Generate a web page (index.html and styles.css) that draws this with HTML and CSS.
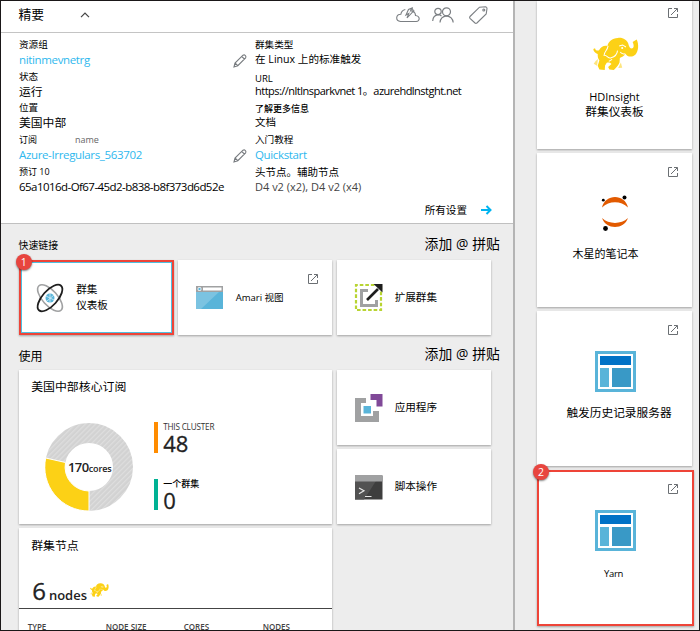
FILE: index.html
```html
<!DOCTYPE html>
<html lang="zh-CN">
<head>
<meta charset="utf-8">
<title>HDInsight</title>
<link rel="stylesheet" href="styles.css">
</head>
<body>
<svg class="defs" aria-hidden="true">
  <symbol id="open" viewBox="0 0 10 10"><path d="M4 .5H.5v9h9V6M6 .5h3.5V4M3 7l6.3-6.3" fill="none" stroke="#6b6f73" stroke-width="1"/></symbol>
  <symbol id="pencil" viewBox="0 0 14 14"><path d="M1 13l1-4L10 1.2q1.300-.8 2.300.3t.3 2.300L4.800 11.700zM2 9l2.800 2.700M8.800 2.500l2.700 2.700" fill="none" stroke="#777b7f" stroke-width="1.100"/></symbol>
  <symbol id="elephant" viewBox="248 111 137 100">
    <path fill="#fcd116" d="M262 161C255 158 249 153 249 146L254 144C255 151 261 152 266 150C270 141 281 134 291 137C293 124 305 114 322 113C337 111 349 119 353 130C355 143 363 149 368 142C371 136 368 130 366 125L378 118C385 131 384 153 374 163C364 172 350 170 345 160C341 167 333 170 328 173L327 186C323 197 314 203 310 209L297 207L293 200L303 191C298 185 292 187 289 187L284 195L283 209L267 207L262 196L267 180C262 174 262 167 262 161Z"/>
    <path fill="#fde57e" d="M256 182l7-6-3 20-10-6zM331 186l4 16-12 1z"/>
    <path fill="none" stroke="#fff" stroke-width="3" d="M293 137C291 151 281 154 281 165C291 164 293 176 302 172C315 169 320 161 321 151M326 137l10-3 10 6M329 155q6 8 15 5M295 183l10-6"/>
    <circle cx="335" cy="143" r="3" fill="#fff"/>
  </symbol>
  <symbol id="board" viewBox="0 0 41 41"><path fill="#59b4d9" d="M0 0h41v41H0z"/><path fill="#fff" d="M3 3h35v35H3z"/><path fill="#0072c6" d="M5 5h31v9H5z"/><path fill="#59b4d9" d="M5 17h9v19H5z"/><path fill="#3999c6" d="M17 17h19v19H17z"/></symbol>
</svg>
<div class="screen">
  <main class="blade">
    <header class="bar">
      <h1>精要</h1>
      <svg class="caret" viewBox="0 0 10 6"><path d="M1 5.200L5 1l4 4.200" fill="none" stroke="#444" stroke-width="1.200"/></svg>
      <div class="tools">
        <svg class="cloud" viewBox="0 0 24 16" fill="none" stroke="#7b7f83" stroke-width="1.100"><path d="M12 14.500H4.500Q.6 14 .7 10.800 1 7.500 4.800 7.300 5.500 3.500 9.300 2.500M17 4.500q2.500 1 2.500 4 3.500.4 3.700 3.200-.2 2.600-3 2.800H10"/><path d="M10 8l2.500-5.500L16 1l-1.500 3h3L11 11l1.800-4.500zM16 1l2 4"/></svg>
        <svg class="people" viewBox="0 0 22 16" fill="none" stroke="#7b7f83" stroke-width="1.200"><circle cx="6" cy="4.500" r="3.200"/><circle cx="14.500" cy="4.800" r="4"/><path d="M.7 14q.3-5.500 5.300-6.300 2.300.1 3.500 1.500M8 15.500q.5-6 6.500-6.700 6 .7 6.700 6.700"/></svg>
        <svg class="tag" viewBox="0 0 19 18" fill="none" stroke="#7b7f83" stroke-width="1.100"><path d="M1 10.500L10.500 1.200 16.500.8q1.500.2 1.500 1.700l-.8 5.500-9.300 9q-1 .7-1.900 0L1 12.300q-.7-.9 0-1.800z"/><circle cx="14.800" cy="4" r="1"/></svg>
      </div>
    </header>

    <section class="essentials">
      <dl class="facts">
        <div><dt>资源组</dt><dd class="link">nitinmevnetrg</dd></div>
        <div><dt>状态</dt><dd class="raised">运行</dd></div>
        <div><dt>位置</dt><dd class="raised">美国中部</dd></div>
        <div><dt class="small split"><span>订阅</span><span class="dim">name</span></dt><dd class="link">Azure-Irregulars_563702</dd></div>
        <div><dt class="small">预订 10</dt><dd class="guid">65a1016d-Of67-45d2-b838-b8f373d6d52e</dd></div>
      </dl>
      <div class="pens">
        <svg><use href="#pencil"/></svg>
        <svg><use href="#pencil"/></svg>
      </div>
      <dl class="facts">
        <div><dt>群集类型</dt><dd class="spark">在 Linux 上的标准触发</dd></div>
        <div><dt class="url">URL</dt><dd class="host">https://nltlnsparkvnet 1。azurehdlnstght.net</dd></div>
        <div><dt class="more">了解更多信息</dt><dd class="doc">文档</dd></div>
        <div><dt>入门教程</dt><dd class="link">Quickstart</dd></div>
        <div><dt class="nodes">头节点。辅助节点</dt><dd class="size">D4 v2 (x2), D4 v2 (x4)</dd></div>
      </dl>
      <a class="all"><span>所有设置</span><svg viewBox="0 0 11 10"><path d="M0 5h9.500M5.500 1l4 4-4 4" fill="none" stroke="#00b4f0" stroke-width="2"/></svg></a>
    </section>

    <div class="heading quick"><h2>快速链接</h2><a>添加 @ 拼贴</a></div>
    <div class="tiles">
      <article class="tile picked"><i class="badge">1</i>
        <svg class="ic" viewBox="0 0 28 28" fill="none"><ellipse cx="14" cy="14" rx="16.500" ry="7.500" transform="rotate(48 14 14)" stroke="#a0a1a2" stroke-width="1.600"/><ellipse cx="14" cy="14" rx="16.500" ry="7.500" transform="rotate(-48 14 14)" stroke="#1e1e1e" stroke-width="1.800"/><circle cx="14" cy="14" r="4.500" fill="#59b4d9"/><path d="M10 12l8 4M14 9.500v9M18 11l-7 6" stroke="#d5edf7" stroke-width=".8"/></svg>
        <p class="two">群集<br>仪表板</p></article>
      <article class="tile"><svg class="open"><use href="#open"/></svg>
        <svg class="ic" viewBox="0 0 28 28"><path fill="#59b4d9" d="M0 2h27v23H0z"/><path fill="#7bc3e1" d="M0 8h23L5 25H0z"/><path fill="#a0a1a2" d="M0 2h27v6H0z"/><path fill="#fff" d="M7 3.500h18.500v3H7z"/><circle cx="3.500" cy="5" r="2" fill="#fff"/><circle cx="3.500" cy="5" r="1.200" fill="#59b4d9"/></svg>
        <p class="ambari">Amari 视图</p></article>
      <article class="tile">
        <svg class="ic" viewBox="0 0 28 28" fill="none"><path d="M1 1h25v25H1z" stroke="#b8d432" stroke-width="2.200" stroke-dasharray="3.600 1.955" stroke-dashoffset="1.800"/><path d="M13 6.500H6.500v15h15V16" stroke="#a0a1a2" stroke-width="3"/><path d="M12 16L23 5" stroke="#1e1e1e" stroke-width="2.600"/><path d="M18.500 0H27.500v8.500z" fill="#1e1e1e"/></svg>
        <p>扩展群集</p></article>
    </div>

    <div class="heading usage"><h2>使用</h2><a>添加 @ 拼贴</a></div>
    <div class="tiles">
      <article class="card cores">
        <h3>美国中部核心订阅</h3>
        <div class="chart">
          <div class="donut"><svg viewBox="0 0 88 88">
            <defs><pattern id="hatch" width="3.600" height="3.600" patternUnits="userSpaceOnUse" patternTransform="rotate(45)"><path fill="#d2d2d2" d="M0 0h4v4H0z"/><path fill="#dedede" d="M0 0h1.200v4H0z"/></pattern></defs>
            <circle cx="44" cy="44" r="34" fill="none" stroke="url(#hatch)" stroke-width="20"/>
            <path d="M44 88A44 44 0 0 1 .7 35L20.500 39.500A24 24 0 0 0 44 68z" fill="#fcd116" stroke="#fff" stroke-width="1"/></svg>
            <span><b>170</b>cores</span></div>
          <div class="legend">
            <div class="key orange"><small>THIS CLUSTER</small><strong>48</strong></div>
            <div class="key teal"><small class="zh">一个群集</small><strong>0</strong></div>
          </div>
        </div>
      </article>
      <div class="stack">
        <article class="tile"><svg class="ic" viewBox="0 0 28 28"><path fill="#a0a1a2" d="M0 4h11v5H6v13h12v-5h6v11H0z"/><path fill="#804998" d="M15.500 0H27.500v12.500H21.500V6H15.500z"/><path fill="#59b4d9" d="M8.500 12h7.500v7.500H8.500z"/></svg><p>应用程序</p></article>
        <article class="tile"><svg class="ic" viewBox="0 0 28 28"><path fill="#3e3e3e" d="M0 2.500h27.500v24H0z"/><path fill="#525252" d="M0 8h21L9 26.500H0z"/><path fill="#a0a1a2" d="M0 2.500h27.500V8.500H0z"/><path d="M4 15l5 2.800-5 3M10 23.500h6.500" fill="none" stroke="#e6e6e6" stroke-width="1.200"/></svg><p>脚本操作</p></article>
      </div>
    </div>

    <article class="card hosts">
      <h3>群集节点</h3>
      <div class="count"><b>6</b><span>nodes</span><svg><use href="#elephant"/></svg></div>
      <div class="cols"><span>TYPE</span><span>NODE SIZE</span><span>CORES</span><span>NODES</span></div>
    </article>
  </main>

  <aside class="dash">
    <article class="big first"><svg class="open"><use href="#open"/></svg><svg class="pic eleph"><use href="#elephant"/></svg><p class="hd">HDInsight<br><span>群集仪表板</span></p></article>
    <article class="big"><svg class="open"><use href="#open"/></svg>
      <svg class="pic jup" viewBox="0 0 28 38"><path fill="#e25a00" d="M1 12.500C4 -1.500 24 -1.500 27 12.500C20 5.500 8 5.500 1 12.500ZM1 23C8 29.500 20 29.500 27 23C23 35 5 35 1 23Z"/><circle cx="2.300" cy="5.200" r="1.400"/><circle cx="23.500" cy="2.400" r="2"/><circle cx="4.500" cy="33.500" r="2.400"/></svg>
      <p class="nb">木星的笔记本</p></article>
    <article class="big"><svg class="open"><use href="#open"/></svg><svg class="pic"><use href="#board"/></svg><p class="hist">触发历史记录服务器</p></article>
    <article class="big ring"><i class="badge">2</i><svg class="open"><use href="#open"/></svg><svg class="pic"><use href="#board"/></svg><p class="yarn">Yarn</p></article>
  </aside>
</div>
</body>
</html>
```

FILE: styles.css
```css
* { box-sizing: border-box; margin: 0; padding: 0; }
body { width: 700px; height: 631px; overflow: hidden; font-family: "Open Sans", "Noto Sans CJK SC", sans-serif; color: #000; }
svg { display: block; }
.defs { display: none; }
h1, h2, h3 { font-weight: 400; }
.screen { display: flex; width: 700px; height: 631px; border: 1px solid #1a1718; background: #ededed; overflow: hidden; }

.blade { width: 514px; flex: none; border-right: 2px solid #b4b4b4; }
.bar { height: 32px; display: flex; align-items: center; padding: 0 25px 3px 17.500px; background: #fff; border-bottom: 1px solid #c4c4c4; }
.bar h1 { font-size: 12.800px; line-height: 20px; margin-top: -2px; }
.caret { width: 10px; height: 6px; margin-left: 35.500px; }
.tools { display: flex; align-items: center; margin-left: auto; gap: 12px; }
.cloud { width: 24px; height: 16px; }
.people { width: 22px; height: 16px; }
.tag { width: 19px; height: 18px; margin-left: 3px; }

.essentials { display: grid; grid-template-columns: 214px 22px 1fr; grid-template-rows: 163px 16px; height: 191px; padding: 5px 0 0 18px; background: #fff; border-bottom: 1px solid #c0c0c0; align-content: start; }
.facts > div { height: 31.700px; white-space: nowrap; }
dt { height: 14px; line-height: 13.500px; font-size: 9.600px; }
dd { height: 16px; line-height: 16px; font-size: 11.800px; }
.raised { line-height: 14px; }
.small { font-size: 9px; }
.split { display: flex; gap: 38px; }
.dim { color: #666; font-size: 9px; }
.link { color: #2eb8ee; font-size: 11.500px; letter-spacing: -.35px; }
.guid { font-size: 11.500px; letter-spacing: -.55px; }
.spark { font-size: 10.600px; line-height: 14px; }
.url { font-size: 9.500px; line-height: 17px; }
.host { font-size: 11px; letter-spacing: -.52px; line-height: 14.500px; }
.more { font-size: 9px; font-weight: 500; line-height: 16px; }
.doc { font-size: 10.500px; line-height: 14px; }
.nodes { font-size: 10.500px; line-height: 14px; }
.size { font-size: 11px; color: #444; }
.pens { padding-top: 16px; }
.pens svg { width: 14px; height: 14px; margin-bottom: 81px; }
.all { grid-column: 1 / 4; display: flex; justify-content: flex-end; align-items: center; gap: 14px; padding-right: 21px; height: 16px; font-size: 10.600px; }
.all svg { width: 11px; height: 10px; margin-top: 2px; }

.heading { display: flex; justify-content: space-between; align-items: center; padding: 0 13px 0 17.500px; }
.heading h2 { font-size: 9.900px; }
.heading a { font-size: 13.800px; letter-spacing: .1px; margin-top: -3px; }
.quick { height: 36px; padding-top: 5px; }
.usage { height: 35px; padding-top: 6px; }
.usage h2 { font-size: 12px; }
.usage a { margin-top: -6px; }

.tiles { display: flex; gap: 4.500px; padding-left: 17.700px; height: 75px; }
.tile, .card, .big { background: #fff; box-shadow: 0 1px 2px rgba(0, 0, 0, .32); }
.tile { position: relative; width: 154.500px; height: 75px; display: flex; align-items: center; padding-left: 18px; gap: 12px; font-size: 10.600px; flex: none; }
.tile p { margin-top: -2px; }
.ic { width: 28px; height: 28px; overflow: visible; }
.open { position: absolute; width: 10px; height: 10px; top: 14px; right: 14px; }
.picked { width: 155.500px; margin-right: -1px; border: 2px solid #ee4438; outline: 1px solid #4fc0e0; outline-offset: -3px; padding-left: 15.500px; }
.two { line-height: 16px; }
.ambari { font-size: 9.500px; }
.badge { position: absolute; width: 16px; height: 16px; border-radius: 50%; background: #e8453f; color: #fff; font: 10.500px/16px "Open Sans", sans-serif; text-align: center; box-shadow: 0 1px 2px rgba(0, 0, 0, .5); left: -5px; top: -8px; }
.usage + .tiles { height: 154px; }
.stack { display: grid; gap: 4px; align-content: start; }
.card { width: 313.500px; flex: none; }
.card h3 { padding-left: 12.500px; font-size: 11.900px; line-height: 18px; margin-top: -1px; margin-bottom: 1px; }
.cores { height: 154px; padding-top: 8px; }
.chart { display: flex; padding: 27px 0 0 26.500px; }
.donut { display: grid; width: 88px; height: 88px; }
.donut svg, .donut span { grid-area: 1 / 1; }
.donut span { align-self: center; justify-self: center; font-size: 9px; color: #222; font-weight: 600; letter-spacing: -.15px; padding-left: 1px; }
.donut b { font-size: 13px; font-weight: 600; letter-spacing: -.5px; }
.legend { display: grid; gap: 26px; margin: -1px 0 0 20.500px; align-content: start; }
.key { height: 31px; border-left: 4px solid #ff8c00; padding-left: 5.500px; }
.teal { border-color: #00b294; }
.key small { display: block; height: 9px; font-size: 8.200px; line-height: 10px; color: #333; letter-spacing: -.2px; white-space: nowrap; }
.key .zh { font-size: 9px; color: #000; font-weight: 500; letter-spacing: 0; }
.key strong { display: block; font-size: 22px; line-height: 24px; font-weight: 400; color: #222; -webkit-text-stroke: .3px #222; }

.hosts { height: 110px; margin: 4px 0 0 17.700px; padding-top: 9px; }
.count { display: flex; align-items: baseline; height: 54px; padding: 20px 0 0 13.500px; border-bottom: 1px solid #444; color: #222; }
.count b { font-size: 24px; line-height: 31px; font-weight: 400; -webkit-text-stroke: .3px #222; }
.count span { font-size: 13px; font-weight: 600; margin-left: 3px; }
.count svg { width: 19px; height: 14px; margin-left: 3px; align-self: flex-start; margin-top: 8px; }
.cols { display: grid; grid-template-columns: 78px 78px 79px 1fr; padding: 12px 0 0 9px; font-size: 8px; font-weight: 600; line-height: 12px; color: #444; }

.dash { padding-left: 22px; display: grid; gap: 4px; align-content: start; grid-template-rows: 148px 154px 155px 156px; }
.big { position: relative; width: 155px; display: flex; flex-direction: column; align-items: center; padding-top: 39px; text-align: center; white-space: nowrap; }
.first { padding-top: 36px; }
.first .open { top: 7px; }
.pic { width: 41px; height: 41px; margin-left: 1px; margin-top: 1px; }
.eleph { width: 46px; height: 34px; margin-top: 0; margin-left: 2px; }
.jup { width: 28px; height: 38px; margin-top: 3px; }
.hd { margin-top: 19px; font-size: 11px; line-height: 14px; }
.hd span { font-size: 11.700px; }
.nb { margin: 13px 18px 0 0; font-size: 11px; line-height: 16px; }
.hist { margin-top: 11px; font-size: 11.700px; line-height: 18px; margin-left: 9px; }
.ring { width: 157px; border: 2px solid #ee4438; padding-top: 37px; }
.ring .open { top: 12px; right: 14px; }
.ring .pic { margin-left: -1px; }
.ring .badge { left: -6px; top: -8px; }
.yarn { margin: 16px 4px 0 0; font-size: 9.500px; line-height: 14px; letter-spacing: -.3px; }
```
